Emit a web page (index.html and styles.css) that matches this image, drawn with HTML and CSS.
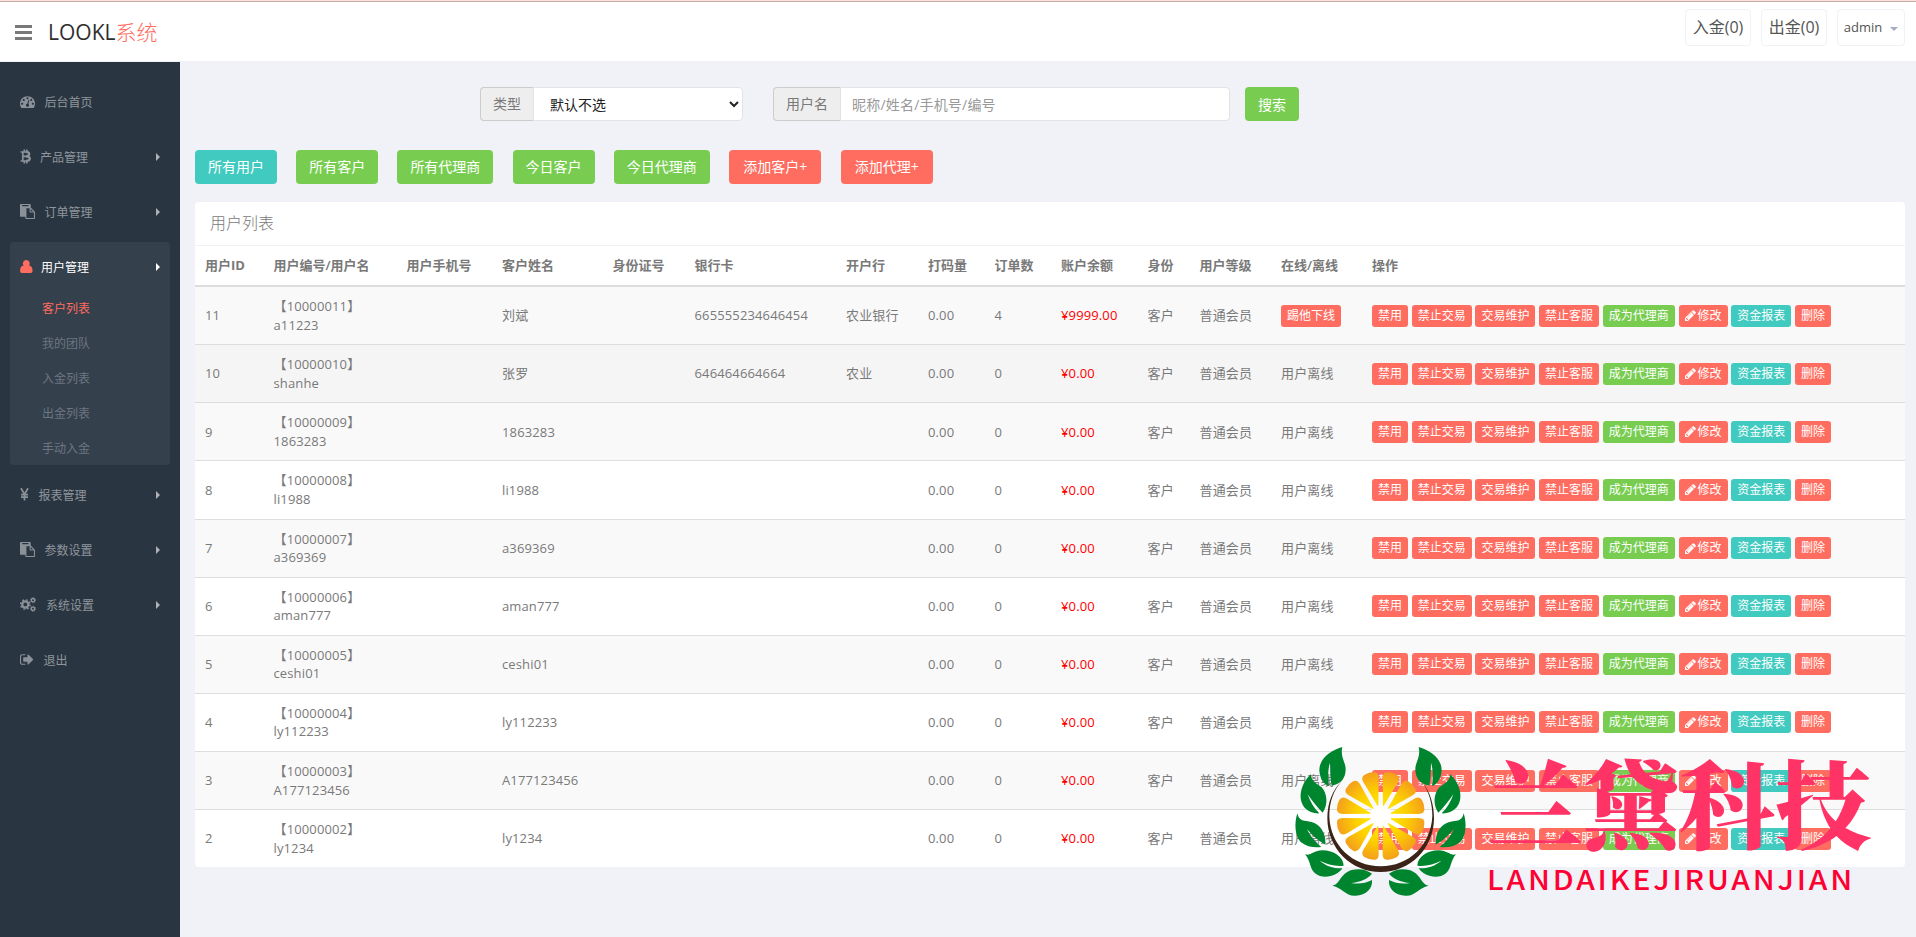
FILE: index.html
```html
<!DOCTYPE html>
<html lang="zh-CN">
<head>
<meta charset="utf-8">
<title>LOOKL系统</title>
<link rel="stylesheet" href="styles.css">
</head>
<body>
<svg class="defs" width="0" height="0">
  <symbol id="i-dash" viewBox="0 0 1792 1792"><path d="M384 1152q0-53-37.500-90.500t-90.500-37.500-90.500 37.500-37.500 90.500 37.500 90.500 90.500 37.500 90.500-37.500 37.500-90.500zm192-448q0-53-37.500-90.500t-90.500-37.500-90.500 37.500-37.500 90.500 37.500 90.500 90.500 37.500 90.500-37.500 37.500-90.500zm428 481l101-382q6-26-7.500-48.500t-38.500-29.500-48 6.500-30 39.500l-101 382q-60 5-107 43.500t-63 98.500q-20 77 20 146t117 89 146-20 89-117q16-60-6-117t-72-91zm660-33q0-53-37.500-90.500t-90.500-37.500-90.500 37.500-37.500 90.500 37.500 90.500 90.500 37.500 90.500-37.500 37.500-90.500zm-640-640q0-53-37.500-90.500t-90.500-37.500-90.500 37.500-37.500 90.500 37.500 90.500 90.500 37.500 90.500-37.500 37.500-90.500zm448 192q0-53-37.500-90.500t-90.500-37.500-90.500 37.500-37.500 90.500 37.500 90.500 90.500 37.500 90.500-37.500 37.500-90.500zm320 448q0 261-141 483-19 29-54 29h-1402q-35 0-54-29-141-221-141-483 0-182 71-348t191-286 286-191 348-71 348 71 286 191 191 286 71 348z"/></symbol>
  <symbol id="i-paste" viewBox="0 0 1792 1792"><path d="M768 1664h896v-640h-416q-40 0-68-28t-28-68v-416h-384v1152zm256-1440v-64q0-13-9.500-22.500t-22.500-9.500h-704q-13 0-22.500 9.500t-9.500 22.500v64q0 13 9.500 22.500t22.500 9.500h704q13 0 22.500-9.500t9.500-22.500zm256 672h299l-299-299v299zm512 128v672q0 40-28 68t-68 28h-960q-40 0-68-28t-28-68v-160h-544q-40 0-68-28t-28-68v-1344q0-40 28-68t68-28h1088q40 0 68 28t28 68v328q21 13 36 28l408 408q28 28 48 76t20 88z"/></symbol>
  <symbol id="i-user" viewBox="0 0 15 15"><path d="M6.300 0.900a3.500 3.500 0 0 1 2.700 5.700q3.500 0.500 3.500 4.900v0.800q0 1.700-1.700 1.700h-9q-1.700 0-1.700-1.700v-0.800q0-4.400 3.500-4.900a3.500 3.500 0 0 1 2.700-5.700z"/></symbol>
  <symbol id="i-btc" viewBox="0 0 15 15"><path d="M0.600 3h6M0.600 12h6M2.800 3v9M2.800 7.400h4M4.300 0.400v2.600M6.800 0.400v2.600M4.300 12v2.600M6.800 12v2.600" fill="none" stroke="currentColor" stroke-width="1.700"/><path d="M6 3c4.200-0.400 4.200 4.400 0 4.400M6 7.400c5.200-0.400 5 4.600 0 4.600" fill="none" stroke="currentColor" stroke-width="2.300"/></symbol>
  <symbol id="i-cny" viewBox="0 0 15 15"><path d="M1 1.200l3.500 6L8 1.200M4.500 7v6.600M1 7.700h7M1 10.200h7" fill="none" stroke="currentColor" stroke-width="1.700"/></symbol>
  <symbol id="i-cogs" viewBox="0 0 16 15"><g fill="none" stroke="currentColor"><circle cx="5.300" cy="7.500" r="3.100" stroke-width="2.300"/><circle cx="5.300" cy="7.500" r="4.700" stroke-width="1.400" stroke-dasharray="1.850 1.840"/><circle cx="13" cy="3.200" r="1.700" stroke-width="1.400"/><circle cx="13" cy="3.200" r="2.600" stroke-width="0.900" stroke-dasharray="1.020 1.020"/><circle cx="13" cy="11.800" r="1.700" stroke-width="1.400"/><circle cx="13" cy="11.800" r="2.600" stroke-width="0.900" stroke-dasharray="1.020 1.020"/></g></symbol>
  <symbol id="i-out" viewBox="0 0 1792 1792"><path transform="translate(-64 0)" d="M704 1440q0 4 1 20t.5 26.500-3 23.500-10 19.500-20.500 6.500h-320q-119 0-203.500-84.500t-84.500-203.500v-704q0-119 84.500-203.500t203.500-84.500h320q13 0 22.500 9.500t9.500 22.500q0 4 1 20t.5 26.500-3 23.500-10 19.500-20.500 6.500h-320q-66 0-113 47t-47 113v704q0 66 47 113t113 47h312l11.500 1 11.500 3 8 5.500 7 9 2 13.500zm928-544q0 26-19 45l-544 544q-19 19-45 19t-45-19-19-45v-288h-448q-26 0-45-19t-19-45v-384q0-26 19-45t45-19h448v-288q0-26 19-45t45-19 45 19l544 544q19 19 19 45z"/></symbol>
  <symbol id="i-pencil" viewBox="128 0 1536 1792"><path d="M491 1536l91-91-235-235-91 91v107h128v128h107zm523-928q0-22-22-22-10 0-17 7l-542 542q-7 7-7 17 0 22 22 22 10 0 17-7l542-542q7-7 7-17zm-54-192l416 416-832 832h-416v-416zm683 96q0 53-37 90l-166 166-416-416 166-165q36-38 90-38 53 0 91 38l235 234q37 39 37 91z"/></symbol>
</svg>

<header class="header">
  <div class="brand">
    <span class="bars"><i></i><i></i><i></i></span>
    <a class="logo">LOOKL<span>系统</span></a>
  </div>
  <nav class="top-nav">
    <a class="top-box">入金(0)</a>
    <a class="top-box">出金(0)</a>
    <a class="top-box account">admin<b class="caret"></b></a>
  </nav>
</header>

<div class="shell">
  <aside class="sidebar">
    <a class="item"><svg class="icon w-dash"><use href="#i-dash"/></svg>后台首页</a>
    <a class="item sub"><svg class="icon w-btc"><use href="#i-btc"/></svg>产品管理</a>
    <a class="item sub"><svg class="icon w-dash"><use href="#i-paste"/></svg>订单管理</a>
    <div class="group">
      <a class="item sub active"><svg class="icon w-user"><use href="#i-user"/></svg>用户管理</a>
      <ul class="submenu">
        <li class="current">客户列表</li>
        <li>我的团队</li>
        <li>入金列表</li>
        <li>出金列表</li>
        <li>手动入金</li>
      </ul>
    </div>
    <a class="item sub"><svg class="icon w-cny"><use href="#i-cny"/></svg>报表管理</a>
    <a class="item sub"><svg class="icon w-dash"><use href="#i-paste"/></svg>参数设置</a>
    <a class="item sub"><svg class="icon w-cogs"><use href="#i-cogs"/></svg>系统设置</a>
    <a class="item"><svg class="icon w-out"><use href="#i-out"/></svg>退出</a>
  </aside>

  <main class="main">
    <form class="filter">
      <div class="field field-type"><span class="addon">类型</span><select><option>默认不选</option></select></div>
      <div class="field field-name"><span class="addon">用户名</span><input type="text" placeholder="昵称/姓名/手机号/编号"></div>
      <button type="button" class="btn green">搜索</button>
    </form>

    <div class="toolbar">
      <a class="btn teal">所有用户</a>
      <a class="btn green">所有客户</a>
      <a class="btn green">所有代理商</a>
      <a class="btn green">今日客户</a>
      <a class="btn green">今日代理商</a>
      <a class="btn red add">添加客户+</a>
      <a class="btn red add">添加代理+</a>
    </div>

    <section class="panel">
      <h1 class="panel-title">用户列表</h1>
      <table class="users">
        <colgroup><col class="c1"><col class="c2"><col class="c3"><col class="c4"><col class="c5"><col class="c6"><col class="c7"><col class="c8"><col class="c9"><col class="c10"><col class="c11"><col class="c12"><col class="c13"><col></colgroup>
        <thead><tr><th>用户<b>ID</b></th><th>用户编号/用户名</th><th>用户手机号</th><th>客户姓名</th><th>身份证号</th><th>银行卡</th><th>开户行</th><th>打码量</th><th>订单数</th><th>账户余额</th><th>身份</th><th>用户等级</th><th>在线/离线</th><th>操作</th></tr></thead>
        <tbody id="rows"></tbody>
      </table>
    </section>
  </main>
</div>

<div class="watermark">
  <svg class="emblem" viewBox="0 0 960 540">
    <defs>
      <radialGradient id="juice" gradientUnits="userSpaceOnUse" cx="0" cy="0" r="138"><stop offset=".3" stop-color="#ffe000"/><stop offset=".55" stop-color="#fdd000"/><stop offset="1" stop-color="#f39a1f"/></radialGradient>
      <path id="seg" fill="url(#juice)" d="M31 -1L112 -24Q129 -28 132 -14Q136 0 132 14Q129 28 112 24L31 1Z"/>
      <g id="leaves">
        <g fill="#00852f">
          <path d="M187 51C150 62 118 85 118 122C120 145 130 162 147 168C144 145 143 120 150 98C151 120 150 145 155 167C185 163 197 142 197 118C197 95 180 82 187 51Z"/>
          <path d="M92 133C70 155 60 180 62 205C65 235 90 252 118 250C102 235 90 215 83 193C97 213 112 233 128 248C145 225 142 190 125 172C110 160 96 158 92 133Z"/>
          <path d="M52 250C42 280 45 320 62 336C82 351 103 354 124 351C105 337 90 317 81 298C97 315 113 332 136 344C138 310 122 284 95 276C73 271 57 276 52 250Z"/>
          <path d="M75 373C92 378 100 362 127 361C162 361 190 381 191 407C165 410 140 402 119 392C138 408 161 416 187 415C174 436 132 452 105 430C88 415 93 394 75 373Z"/>
          <path d="M157 467C182 462 179 431 215 420C240 414 262 420 276 431C262 449 238 456 213 459C235 463 257 460 276 450C278 476 260 495 226 497C195 498 188 473 157 467Z"/>
        </g>
      </g>
    </defs>
    <use href="#leaves"/>
    <use href="#leaves" transform="translate(603 0) scale(-1 1)"/>
    <path fill="#3b2417" d="M187 152C157 178 142 220 142 264C142 356 214 426 302 426C390 426 462 356 462 264C462 224 450 184 427 157C448 187 457 222 457 258C453 346 386 409 302 409C218 409 150 346 148 258C148 216 160 180 187 152Z"/>
    <circle cx="302" cy="258" r="34" fill="#fff"/>
    <g transform="translate(302 258)" id="segments"></g>
  </svg>
  <div class="wm-title">兰黛科技</div>
  <div class="wm-sub">LANDAIKEJIRUANJIAN</div>
</div>
<script src="app.js"></script>
</body>
</html>
```
FILE: styles.css
```css
* { box-sizing: border-box; }
body {
  margin: 0;
  height: 937px;
  overflow: hidden;
  display: flex;
  flex-direction: column;
  background: #f1f2f7;
  color: #797979;
  font: 13px/1.42857 "Open Sans", "Noto Sans CJK SC", sans-serif;
  text-spacing-trim: space-all;
}
.defs { position: absolute; }

.header {
  height: 62px;
  flex: none;
  display: flex;
  justify-content: space-between;
  padding: 8px 11px 0 15px;
  background: #fff;
  border-top: 1px solid #fae3dc;
  border-bottom: 1px solid #f1f2f7;
  box-shadow: inset 0 1px #c9aca5;
}
.brand { display: flex; height: 44px; margin-top: 1px; }
.bars { width: 17px; margin: 15px 16px 0 0; display: flex; flex-direction: column; gap: 3px; }
.bars i { height: 3px; background: #797979; }
.logo { font-size: 21px; line-height: 44px; color: #2e2e2e; }
.logo span { color: #ff6c60; font-weight: 300; }
.top-nav { display: flex; gap: 10px; }
.top-box {
  width: 66px;
  height: 37px;
  border: 1px solid #f1f2f7;
  border-radius: 4px;
  display: flex;
  align-items: center;
  justify-content: center;
  font-size: 16px;
  color: #555;
  white-space: nowrap;
}
.account { width: 68px; font-size: 13px; }
.caret { margin: 2px 0 0 8px; border: 4px solid transparent; border-top-color: #a5abc5; border-bottom: 0; }

.shell { flex: 1; display: flex; }
.sidebar { width: 180px; padding: 15px 10px 0; background: #2a3542; font-size: 12px; color: #8f959c; }
.item { display: flex; align-items: center; height: 50px; margin-bottom: 5px; padding: 2px 10px 0; line-height: 18px; }
.item.sub::after { content: ""; margin: -2px 0 0 auto; border: 4px solid transparent; border-left-color: #aeb2b7; border-right: 0; }
.item.active { color: #fff; margin: 0; }
.item.active::after { border-left-color: #fff; }
.icon { width: 15px; height: 15px; margin-top: -3px; fill: currentColor; color: #8b9198; flex: none; overflow: visible; }
.active .icon { color: #ff6c60; }
.w-dash { margin-right: 9.500px; }
.w-btc { margin-right: 5px; }
.w-user { margin-right: 6px; }
.w-cny { margin-right: 3.500px; }
.w-cogs { width: 16px; margin-right: 10px; }
.w-out { margin-right: 8.500px; }
.group { height: 223px; margin-bottom: 5px; border-radius: 4px; background: #35404d; }
.submenu { list-style: none; margin: -1px 0 0; padding: 0 0 0 32px; }
.submenu li { line-height: 35px; color: #6c7681; }
.submenu .current { color: #ff6c60; }

.main { flex: 1; padding: 25px 11px 0 15px; }
.filter { display: flex; margin-left: 285px; }
.field { display: flex; height: 34px; font-size: 14px; }
.field-type { width: 263px; margin-right: 30px; }
.field-name { width: 457px; margin-right: 15px; }
.addon { padding: 0 12px; line-height: 31px; background: #eee; border: 1px solid #ccc; border-right: 0; border-radius: 4px 0 0 4px; white-space: nowrap; }
.field select, .field input {
  flex: 1;
  min-width: 0;
  height: 34px;
  border: 1px solid #e2e2e4;
  border-radius: 0 4px 4px 0;
  background: #fff;
  color: #222;
  font: inherit;
  padding: 0 12px;
}
.field input { padding-left: 11px; letter-spacing: 0.200px; }
.field input::placeholder { color: #999; }
.btn {
  height: 34px;
  padding: 0 13px;
  border: 0;
  border-radius: 4px;
  color: #fff;
  font: 14px/33px "Open Sans", "Noto Sans CJK SC", sans-serif;
  white-space: nowrap;
}
.add { width: 92.500px; text-align: center; }
.green { background: #78cd51; }
.teal { background: #41cac0; }
.red { background: #ff6c60; }
.toolbar { display: flex; gap: 19.200px; margin-top: 29px; }

.panel { margin-top: 18px; background: #fff; border-radius: 4px; overflow: hidden; }
.panel-title { margin: 0; height: 44px; padding: 0 15px; font-size: 16px; font-weight: 300; line-height: 43px; border-bottom: 1px solid #eff2f7; }
.users { width: 100%; table-layout: fixed; border-spacing: 0; }
.c1 { width: 68.500px; } .c2 { width: 133px; } .c3 { width: 95.500px; } .c4 { width: 110.500px; }
.c5 { width: 82px; } .c6 { width: 151.500px; } .c7 { width: 82px; } .c8 { width: 66.500px; }
.c9 { width: 66.500px; } .c10 { width: 86.500px; } .c11 { width: 52px; } .c12 { width: 81.500px; } .c13 { width: 91px; }
th, td { padding: 10px; text-align: left; vertical-align: middle; white-space: nowrap; }
th { height: 41px; padding: 9px 10px; font-weight: 600; border-bottom: 2px solid #ddd; }
th b { font-weight: 700; }
td { height: 58.140px; padding: 0 10px; border-top: 1px solid #ddd; letter-spacing: 0.130px; }
tr:first-child td { border-top: 0; height: 57.140px; }
tbody tr:nth-child(odd) { background: #f9f9f9; }
tbody tr.hover { background: #f5f5f5; }
.money { color: #f00; }
.ops { display: flex; gap: 3.700px; }
.mini { display: inline-flex; align-items: center; height: 22px; padding: 0 6px; border-radius: 3px; color: #fff; font-size: 12px; line-height: 18px; letter-spacing: 0; }
.pencil { width: 11px; height: 13px; margin-right: 2px; fill: #fff; }

.watermark { position: absolute; left: 1280px; top: 730px; width: 636px; height: 207px; pointer-events: none; }
.emblem { position: absolute; left: 0; top: 0; width: 320px; height: 180px; }
.wm-title { position: absolute; left: 207px; top: 22px; font: 900 96px/96px "Noto Serif CJK SC", "Noto Sans CJK SC", serif; color: #ff3366; white-space: nowrap; }
.wm-sub { position: absolute; left: 207px; top: 128px; font: 500 27.500px/40px "Noto Sans CJK SC", sans-serif; letter-spacing: 2.600px; color: #ff0033; white-space: nowrap; transform: scaleX(1.088); transform-origin: 0 0; }
```
FILE: app.js
```js
// id, account number, login, name, card, bank, orders, balance
const users = [
  [11, '10000011', 'a11223', '刘斌', '665555234646454', '农业银行', 4, '9999.00'],
  [10, '10000010', 'shanhe', '张罗', '646464664664', '农业', 0, '0.00'],
  [9, '10000009', '1863283', '1863283', '', '', 0, '0.00'],
  [8, '10000008', 'li1988', 'li1988', '', '', 0, '0.00'],
  [7, '10000007', 'a369369', 'a369369', '', '', 0, '0.00'],
  [6, '10000006', 'aman777', 'aman777', '', '', 0, '0.00'],
  [5, '10000005', 'ceshi01', 'ceshi01', '', '', 0, '0.00'],
  [4, '10000004', 'ly112233', 'ly112233', '', '', 0, '0.00'],
  [3, '10000003', 'A177123456', 'A177123456', '', '', 0, '0.00'],
  [2, '10000002', 'ly1234', 'ly1234', '', '', 0, '0.00']
];

const ops = `<div class="ops">
  <a class="mini red">禁用</a><a class="mini red">禁止交易</a><a class="mini red">交易维护</a><a class="mini red">禁止客服</a>
  <a class="mini green">成为代理商</a><a class="mini red"><svg class="pencil"><use href="#i-pencil"/></svg>修改</a>
  <a class="mini teal">资金报表</a><a class="mini red">删除</a></div>`;

document.getElementById('rows').innerHTML = users.map(([id, no, login, name, card, bank, orders, money]) => `
  <tr class="${id === 10 ? 'hover' : ''}">
    <td>${id}</td><td>【${no}】<br>${login}</td><td></td><td>${name}</td><td></td><td>${card}</td><td>${bank}</td>
    <td>0.00</td><td>${orders}</td><td class="money">¥${money}</td><td>客户</td><td>普通会员</td>
    <td>${id === 11 ? '<a class="mini red">踢他下线</a>' : '用户离线'}</td><td>${ops}</td>
  </tr>`).join('');

// twelve citrus segments around the hub
document.getElementById('segments').innerHTML = Array.from({ length: 12 }, (_, i) =>
  `<use href="#seg" transform="rotate(${15 + i * 30})"/>`).join('');
```
